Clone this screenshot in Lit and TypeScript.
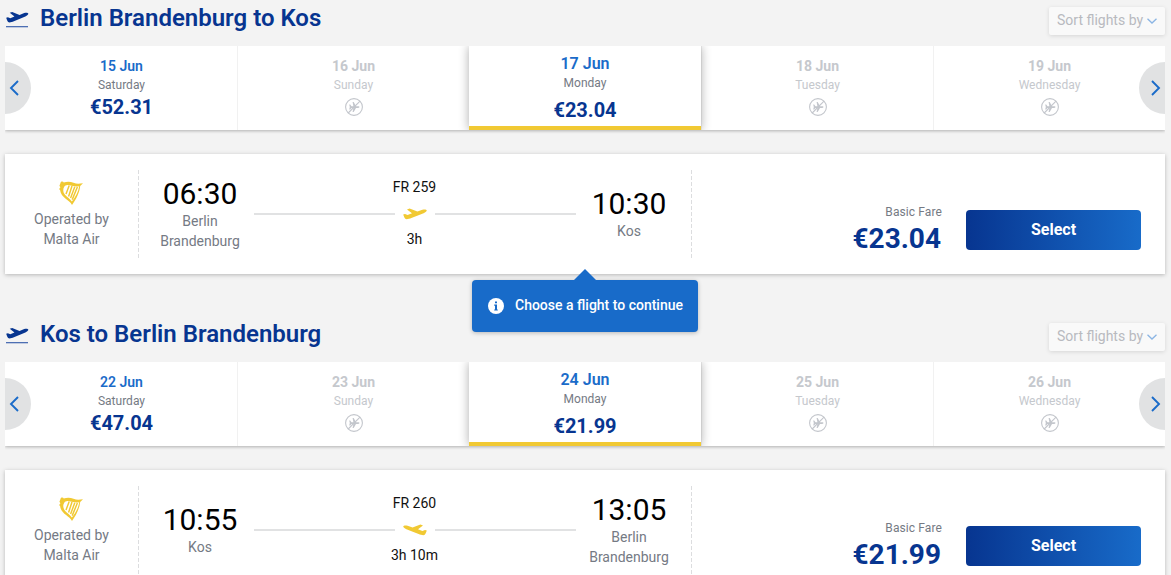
import { LitElement, html, css, svg } from 'lit';
import { customElement, property } from 'lit/decorators.js';
import { classMap } from 'lit/directives/class-map.js';

interface Day {
  date: string;
  weekday: string;
  price?: string;
  selected?: boolean;
}

interface Flight {
  number: string;
  duration: string;
  departure: string;
  from: string;
  arrival: string;
  to: string;
  price: string;
  inbound?: boolean;
}

interface Journey {
  title: string;
  days: Day[];
  flight: Flight;
}

const journeys: Journey[] = [
  {
    title: 'Berlin Brandenburg to Kos',
    days: [
      { date: '15 Jun', weekday: 'Saturday', price: '€52.31' },
      { date: '16 Jun', weekday: 'Sunday' },
      { date: '17 Jun', weekday: 'Monday', price: '€23.04', selected: true },
      { date: '18 Jun', weekday: 'Tuesday' },
      { date: '19 Jun', weekday: 'Wednesday' },
    ],
    flight: {
      number: 'FR 259',
      duration: '3h',
      departure: '06:30',
      from: 'Berlin Brandenburg',
      arrival: '10:30',
      to: 'Kos',
      price: '€23.04',
    },
  },
  {
    title: 'Kos to Berlin Brandenburg',
    days: [
      { date: '22 Jun', weekday: 'Saturday', price: '€47.04' },
      { date: '23 Jun', weekday: 'Sunday' },
      { date: '24 Jun', weekday: 'Monday', price: '€21.99', selected: true },
      { date: '25 Jun', weekday: 'Tuesday' },
      { date: '26 Jun', weekday: 'Wednesday' },
    ],
    flight: {
      number: 'FR 260',
      duration: '3h 10m',
      departure: '10:55',
      from: 'Kos',
      arrival: '13:05',
      to: 'Berlin Brandenburg',
      price: '€21.99',
      inbound: true,
    },
  },
];

// shared by the title and the route line
const planeShape = svg`
  <path d="M0.2 6.5 L2 6 L4.6 6.9 L9 5.3 L4 1.5 L6.6 0.6 L14.4 3.6
    L19.4 1.8 C21.4 1.2 23.4 1.4 23.7 2.3 C24 3.4 22.4 4.5 20.6 5.2
    L8.4 10 C6.2 10.9 3.4 11.6 2.3 10.8 C1.5 10.2 0.8 8 0.2 6.5 Z"/>
`;

@customElement('date-carousel')
export class DateCarousel extends LitElement {
  @property({ type: Array }) days: Day[] = [];

  static styles = css`
    :host {
      display: block;
      position: relative;
      font-family: Roboto, sans-serif;
    }

    .days {
      display: grid;
      grid-template-columns: repeat(5, 1fr);
      height: 84px;
      background: #fff;
      box-shadow: 0 1px 3px rgba(0, 0, 0, 0.28);
      clip-path: inset(0 0 -6px 0);
    }

    .day {
      box-sizing: border-box;
      display: flex;
      flex-direction: column;
      align-items: center;
      padding-top: 10px;
      border-left: 1px solid #f1f1f1;
      color: #c5c8cd;
    }

    .day:first-child {
      border-left-color: transparent;
    }

    .date {
      font-size: 14px;
      line-height: 20px;
      font-weight: 700;
    }

    .weekday {
      font-size: 12px;
      line-height: 18px;
    }

    .price {
      font-size: 20px;
      line-height: 27px;
      font-weight: 700;
      color: #073590;
    }

    .available .date {
      color: #1a6bc9;
      font-weight: 600;
    }

    .available .weekday {
      color: #757a84;
    }

    .selected {
      z-index: 1;
      padding-top: 8px;
      border-left: none;
      border-bottom: 4px solid #f1c933;
      box-shadow: 0 0 10px rgba(0, 0, 0, 0.32);
      clip-path: inset(0 -20px 0 -20px);
      background: #fff;
    }

    .selected .date {
      font-size: 16px;
    }

    .selected .price {
      margin-top: 5px;
    }

    .unavailable {
      margin-top: 3px;
    }

    .arrows {
      position: absolute;
      inset: 16px 0 16px 0;
      display: flex;
      justify-content: space-between;
      pointer-events: none;
    }

    .arrow {
      box-sizing: border-box;
      width: 26px;
      height: 52px;
      padding: 0;
      border: none;
      display: flex;
      align-items: center;
      background: #e1e2e3;
      pointer-events: auto;
    }

    .prev {
      border-radius: 0 26px 26px 0;
      padding-left: 4px;
    }

    .next {
      border-radius: 26px 0 0 26px;
      padding-left: 11px;
    }
  `;

  renderDay(day: Day) {
    const classes = { day: true, available: !!day.price, selected: !!day.selected };
    return html`
      <div class=${classMap(classes)}>
        <div class="date">${day.date}</div>
        <div class="weekday">${day.weekday}</div>
        ${day.price
          ? html`<div class="price">${day.price}</div>`
          : html`
              <svg class="unavailable" width="20" height="20" viewBox="0 0 20 20">
                <circle cx="10" cy="10" r="8.4" fill="none" stroke="#c3c6cc" stroke-width="1.1" />
                <path
                  d="M5.2 7.4 H6.2 L7.5 9.3 H9.4 L8.6 5 H9.7 L12 9.3 H14.2 C15 9.3 15.5 9.7 15.5 10.1
                    C15.5 10.5 15 10.9 14.2 10.9 H12 L9.7 15 H8.6 L9.4 10.9 H7.5 L6.2 12.6 H5.2 L5.8 10.1 Z"
                  fill="#c3c6cc"
                />
                <path d="M4.2 16 L16 4.2" stroke="#c3c6cc" stroke-width="1.1" />
              </svg>
            `}
      </div>
    `;
  }

  render() {
    return html`
      <div class="days">${this.days.map((day) => this.renderDay(day))}</div>
      <div class="arrows">
        <button class="arrow prev" aria-label="Previous">
          <svg width="11" height="18" viewBox="0 0 11 18">
            <path d="M9 2 L2 9 L9 16" fill="none" stroke="#1a6bc9" stroke-width="1.9" />
          </svg>
        </button>
        <button class="arrow next" aria-label="Next">
          <svg width="11" height="18" viewBox="0 0 11 18">
            <path d="M2 2 L9 9 L2 16" fill="none" stroke="#1a6bc9" stroke-width="1.9" />
          </svg>
        </button>
      </div>
    `;
  }
}

@customElement('flight-card')
export class FlightCard extends LitElement {
  @property({ type: Object }) flight!: Flight;

  static styles = css`
    :host {
      display: block;
      font-family: Roboto, sans-serif;
    }

    .card {
      box-sizing: border-box;
      display: flex;
      height: 120px;
      padding: 16px 24px 16px 0;
      background: #fff;
      box-shadow: 0 1px 4px rgba(0, 0, 0, 0.25);
      color: #757a84;
      font-size: 14px;
      line-height: 20px;
      text-align: center;
    }

    .carrier {
      width: 133px;
      display: flex;
      flex-direction: column;
      align-items: center;
      padding-top: 11px;
      box-sizing: border-box;
    }

    .harp {
      margin-bottom: 4px;
      margin-right: 1px;
    }

    .operator {
      width: 90px;
    }

    .divider {
      width: 1px;
      height: 89px;
      background: repeating-linear-gradient(#dcdddf 0 4px, transparent 4px 6px);
    }

    .schedule {
      display: flex;
      align-items: center;
      width: 552px;
      box-sizing: border-box;
      padding: 0 8px 0 7px;
    }

    .stop {
      width: 108px;
    }

    .time {
      font-size: 30px;
      line-height: 34px;
      color: #000;
    }

    .city {
      width: 90px;
      margin: 0 auto;
      padding-bottom: 1px;
    }

    .route {
      flex: 1;
      color: #111;
      padding-bottom: 2px;
    }

    .track {
      display: flex;
      align-items: center;
      justify-content: space-between;
      height: 32px;
      padding: 1px 0 0;
      margin-bottom: -1px;
      margin-right: -1px;
    }

    .line {
      width: 141px;
      height: 2px;
      background: #e1e2e3;
    }

    .plane {
      fill: #f1c933;
    }

    .inbound .plane {
      transform: scaleX(-1);
    }

    .fare {
      flex: 1;
      text-align: right;
      padding: 32px 25px 0 0;
    }

    .fare-name {
      font-size: 12px;
      line-height: 20px;
      letter-spacing: 0.1px;
      margin-right: -1px;
      color: #757a84;
    }

    .amount {
      font-size: 28px;
      line-height: 34px;
      font-weight: 700;
      color: #073590;
    }

    .select {
      width: 175px;
      height: 40px;
      margin-top: 40px;
      padding: 0 0 2px;
      border: none;
      border-radius: 4px;
      background: linear-gradient(90deg, #073590, #186bc9);
      color: #fff;
      font: 700 16px Roboto, sans-serif;
    }
  `;

  render() {
    const f = this.flight;
    return html`
      <div class="card">
        <div class="carrier">
          <svg class="harp" width="24" height="24" viewBox="0 0 24 24">
            <path
              fill="#f1c933"
              fill-rule="evenodd"
              d="M1.5 2 C1.8 0.3 4 0.1 4.8 1.5 C8 0.2 11.5 0.4 14.5 1.8 C17.5 3 20 2.8 24 2.3
                L21.2 4.9 C20.6 11.5 17.2 18 13 24 C10.4 18.6 2 17.2 1 8.8 L0 8.2 L1.4 6.3
                L0.4 4.8 Z M5.4 5.4 C3.6 8 4 11.2 5.8 13.4 C7.8 15.8 10.8 17.2 12.9 20.6
                C16.4 15.8 19.4 11 20.2 5.2 C15.5 6.2 11 3.8 8.4 4 C7 4.1 6.2 4.5 5.4 5.4 Z"
            />
            <path
              d="M10.2 4.6 L7 13 M13 5 L9.6 15.4 M15.8 5.8 L11.6 17 M18.4 6 L13.2 18.6"
              stroke="#f1c933"
              stroke-width="1.45"
              fill="none"
            />
          </svg>
          <div class="operator">Operated by Malta Air</div>
        </div>
        <div class="divider"></div>
        <div class=${classMap({ schedule: true, inbound: !!f.inbound })}>
          <div class="stop">
            <div class="time">${f.departure}</div>
            <div class="city">${f.from}</div>
          </div>
          <div class="route">
            <div>${f.number}</div>
            <div class="track">
              <div class="line"></div>
              <svg class="plane" width="24" height="12" viewBox="0 0 24 12">${planeShape}</svg>
              <div class="line"></div>
            </div>
            <div>${f.duration}</div>
          </div>
          <div class="stop">
            <div class="time">${f.arrival}</div>
            <div class="city">${f.to}</div>
          </div>
        </div>
        <div class="divider"></div>
        <div class="fare">
          <div class="fare-name">Basic Fare</div>
          <div class="amount">${f.price}</div>
        </div>
        <button class="select">Select</button>
      </div>
    `;
  }
}

@customElement('app-root')
export class AppRoot extends LitElement {
  static styles = css`
    :host {
      display: block;
      position: relative;
      box-sizing: border-box;
      height: 575px;
      overflow: hidden;
      padding: 0 6px 0 5px;
      background: #f3f3f3;
      font-family: Roboto, sans-serif;
    }

    .journey {
      height: 316px;
    }

    .header {
      display: flex;
      height: 46px;
      box-sizing: border-box;
      align-items: flex-start;
    }

    .takeoff {
      margin: 11px 11px 0 1px;
      fill: #073590;
    }

    .title {
      margin: 2px 0 0;
      flex: 1;
      font-size: 24px;
      line-height: 32px;
      font-weight: 600;
      color: #073590;
    }

    .sort {
      display: flex;
      align-items: center;
      justify-content: space-between;
      box-sizing: border-box;
      width: 116px;
      height: 28px;
      margin-top: 7px;
      padding: 0 8px 2px;
      border: none;
      border-radius: 2px;
      background: #f9f9f9;
      box-shadow: 0 1px 4px rgba(0, 0, 0, 0.12);
      color: #b8babf;
      font: 14px Roboto, sans-serif;
      white-space: nowrap;
    }

    .chevron {
      margin-top: 2px;
    }

    flight-card {
      margin-top: 24px;
    }

    .hint {
      position: absolute;
      top: 280px;
      left: 472px;
      box-sizing: border-box;
      width: 226px;
      height: 52px;
      display: flex;
      align-items: center;
      gap: 11px;
      padding-left: 16px;
      border-radius: 4px;
      background: #186bc9;
      box-shadow: 0 1px 4px rgba(0, 0, 0, 0.25);
      color: #fff;
      font-size: 14px;
      font-weight: 500;
      white-space: nowrap;
    }

    .hint-text {
      padding-bottom: 2px;
    }

    .hint::before {
      content: '';
      position: absolute;
      left: 102px;
      top: -11px;
      border: 11px solid transparent;
      border-top: none;
      border-bottom-color: #186bc9;
    }
  `;

  render() {
    return html`
      ${journeys.map(
        (journey) => html`
          <section class="journey">
            <div class="header">
              <svg class="takeoff" width="23" height="17" viewBox="0 0 23 17">
                <g transform="translate(0 0.3) scale(0.94 1)">${planeShape}</g>
                <rect y="15" width="22" height="1.3" fill="#4d6fb3" />
              </svg>
              <h3 class="title">${journey.title}</h3>
              <button class="sort">
                Sort flights by
                <svg class="chevron" width="10" height="6" viewBox="0 0 10 6">
                  <path d="M0.5 0.7 L5 5 L9.5 0.7" fill="none" stroke="#8bb5e4" stroke-width="1.3" />
                </svg>
              </button>
            </div>
            <date-carousel .days=${journey.days}></date-carousel>
            <flight-card .flight=${journey.flight}></flight-card>
          </section>
        `,
      )}
      <div class="hint">
        <svg width="16" height="16" viewBox="0 0 16 16">
          <circle cx="8" cy="8" r="8" fill="#fff" />
          <path d="M7 3.4 H9 V5.2 H7 Z M6.2 6.6 H9 V11.4 H9.8 V12.6 H6.2 V11.4 H7 V7.8 H6.2 Z" fill="#186bc9" />
        </svg>
        <span class="hint-text">Choose a flight to continue</span>
      </div>
    `;
  }
}
